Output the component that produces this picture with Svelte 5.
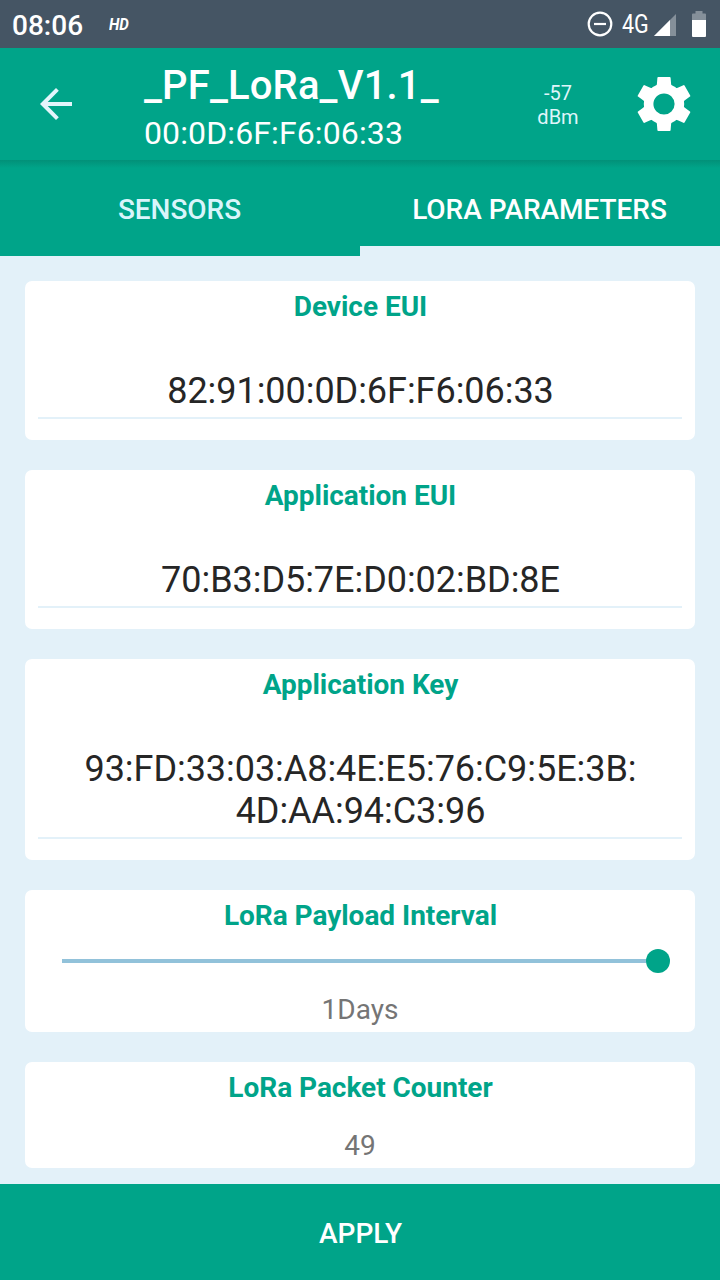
<script>
  const device = { name: "_PF_LoRa_V1.1_", address: "00:0D:6F:F6:06:33", rssi: -57 };
  const tabs = ["Sensors", "LoRa Parameters"];
  const teeth = [0, 60, 120, 180, 240, 300];

  const keys = [
    { label: "Device EUI", lines: ["82:91:00:0D:6F:F6:06:33"] },
    { label: "Application EUI", lines: ["70:B3:D5:7E:D0:02:BD:8E"] },
    { label: "Application Key", lines: ["93:FD:33:03:A8:4E:E5:76:C9:5E:3B:", "4D:AA:94:C3:96"] },
  ];

  let active = $state("LoRa Parameters");
</script>

<div class="screen">
  <div class="status">
    <span class="time">08:06</span>
    <span class="hd">HD</span>
    <svg class="dnd" width="26" height="26" viewBox="0 0 26 26">
      <circle cx="13" cy="13" r="11.3" />
      <path d="M7 13h12" />
    </svg>
    <span class="network">4G</span>
    <svg class="signal" width="22" height="22" viewBox="0 0 22 22">
      <path d="M0 22L22 0V22z" fill="#85909a" />
      <path d="M0 22L16 6V22z" fill="#fff" />
    </svg>
    <svg width="14" height="26" viewBox="0 0 14 26">
      <path d="M0 10V3.5Q0 2.5 1 2.5H3.5V0H10.5V2.5H13Q14 2.5 14 3.5V10z" fill="#85909a" />
      <path d="M0 9H14V25Q14 26 13 26H1Q0 26 0 25z" fill="#fff" />
    </svg>
  </div>

  <header class="toolbar">
    <button class="back" aria-label="Back">
      <svg width="32" height="32" viewBox="0 0 32 32">
        <path d="M32 14H7.7L18.8 2.8 16 0 0 16 16 32 18.8 29.2 7.7 18H32z" />
      </svg>
    </button>
    <div class="device">
      <h1>{device.name}</h1>
      <div class="address">{device.address}</div>
    </div>
    <div class="rssi">{device.rssi}<br />dBm</div>
    <button class="settings" aria-label="Settings">
      <svg width="56" height="56" viewBox="-28 -28 56 56">
        <circle r="15.4" />
        {#each teeth as angle}
          <path d="M-8.6 -14L-7.1 -20 -6.6 -26.2Q-6.5 -27 -5.7 -27H5.7Q6.5 -27 6.6 -26.2L7.1 -20 8.6 -14z" transform="rotate({angle})" />
        {/each}
      </svg>
    </button>
  </header>

  <div class="tabs" role="tablist">
    {#each tabs as tab}
      <button
        class="tab"
        class:active={active === tab}
        role="tab"
        aria-selected={active === tab}
        onclick={() => (active = tab)}
      >
        {tab}
      </button>
    {/each}
  </div>

  <main class="cards">
    {#each keys as key}
      <section class="card">
        <h2>{key.label}</h2>
        <div class="value">
          {#each key.lines as line}
            <div>{line}</div>
          {/each}
        </div>
      </section>
    {/each}

    <section class="card interval">
      <h2>LoRa Payload Interval</h2>
      <div class="slider">
        <div class="track"></div>
        <div class="thumb"></div>
      </div>
      <div class="reading">1Days</div>
    </section>

    <section class="card counter">
      <h2>LoRa Packet Counter</h2>
      <div class="reading">49</div>
    </section>
  </main>

  <button class="apply">Apply</button>
</div>

<style>
  :global(body) {
    margin: 0;
  }

  .screen {
    --green: #00a489;
    --pale: #e3f1f9;
    display: flex;
    flex-direction: column;
    width: 720px;
    height: 1280px;
    overflow: hidden;
    background: var(--pale);
    font-family: Roboto, sans-serif;
  }

  button {
    border: 0;
    padding: 0;
    background: none;
    color: #fff;
    font-family: inherit;
  }

  svg {
    display: block;
  }

  .status {
    display: flex;
    align-items: center;
    box-sizing: border-box;
    height: 48px;
    padding: 0 14px 0 12px;
    background: #455564;
    color: #fff;
  }

  .time {
    width: 97px;
    padding-top: 2px;
    font-size: 28px;
    font-weight: 500;
  }

  .hd {
    font-size: 17px;
    font-weight: 700;
    font-style: italic;
    transform: scaleX(0.89);
    transform-origin: left;
  }

  .dnd {
    margin-left: auto;
    fill: none;
    stroke: #fff;
    stroke-width: 2.2;
  }

  .network {
    width: 32px;
    margin-left: 9px;
    padding-top: 1px;
    font-size: 25px;
    transform: scaleX(0.86);
    transform-origin: left;
  }

  .signal {
    margin: 2px 16px 0 0;
  }

  .toolbar {
    display: flex;
    align-items: center;
    height: 112px;
    background: var(--green);
    color: #fff;
  }

  .back {
    margin-left: 40px;
    fill: #e3f5fb;
  }

  .device {
    width: 366px;
    margin-left: 72px;
    padding-top: 10px;
  }

  h1 {
    margin: 0;
    font-size: 40px;
    font-weight: 500;
    line-height: 47px;
    letter-spacing: 0.15px;
  }

  .address {
    font-size: 32px;
    line-height: 48px;
    letter-spacing: 0.12px;
  }

  .rssi {
    width: 96px;
    padding-top: 2px;
    color: #dff5fa;
    font-size: 20px;
    line-height: 24px;
    text-align: center;
  }

  .settings {
    margin-left: 30px;
  }

  .settings circle {
    fill: none;
    stroke: #fff;
    stroke-width: 9.6;
  }

  .settings path {
    fill: #fff;
  }

  .tabs {
    display: flex;
    height: 96px;
    background: linear-gradient(#029078, var(--green) 8px);
  }

  .tab {
    flex: 1;
    box-sizing: border-box;
    padding: 12px 1px 0 0;
    border-bottom: 10px solid transparent;
    color: #d9f5fb;
    font-size: 28px;
    font-weight: 500;
    letter-spacing: -0.04px;
    text-transform: uppercase;
  }

  .tab.active {
    border-bottom-color: var(--pale);
    color: #fff;
  }

  .cards {
    display: flex;
    flex: 1;
    flex-direction: column;
    gap: 30px;
    padding: 25px 25px 0;
  }

  .card {
    box-sizing: border-box;
    padding: 9px 13px 21px;
    border-radius: 7px;
    background: #fff;
    text-align: center;
  }

  h2 {
    margin: 0;
    padding-left: 1px;
    color: var(--green);
    font-size: 28px;
    font-weight: 700;
    line-height: 33px;
    letter-spacing: -0.03px;
  }

  .value {
    padding: 47px 0 5px 1px;
    border-bottom: 2px solid var(--pale);
    color: #262626;
    font-size: 36px;
    line-height: 42px;
    letter-spacing: -0.04px;
  }

  .reading {
    color: #757575;
    font-size: 28px;
    line-height: 33px;
  }

  .interval {
    height: 142px;
  }

  .slider {
    display: flex;
    align-items: center;
    height: 24px;
    margin: 17px 12px 20px 24px;
  }

  .track {
    flex: 1;
    height: 4px;
    background: #92c2da;
  }

  .thumb {
    width: 24px;
    height: 24px;
    border-radius: 50%;
    background: var(--green);
  }

  .counter {
    height: 106px;
  }

  .counter .reading {
    margin-top: 25px;
  }

  .apply {
    height: 96px;
    padding: 2px 0 0 1px;
    background: var(--green);
    font-size: 28px;
    font-weight: 500;
    text-transform: uppercase;
  }
</style>
